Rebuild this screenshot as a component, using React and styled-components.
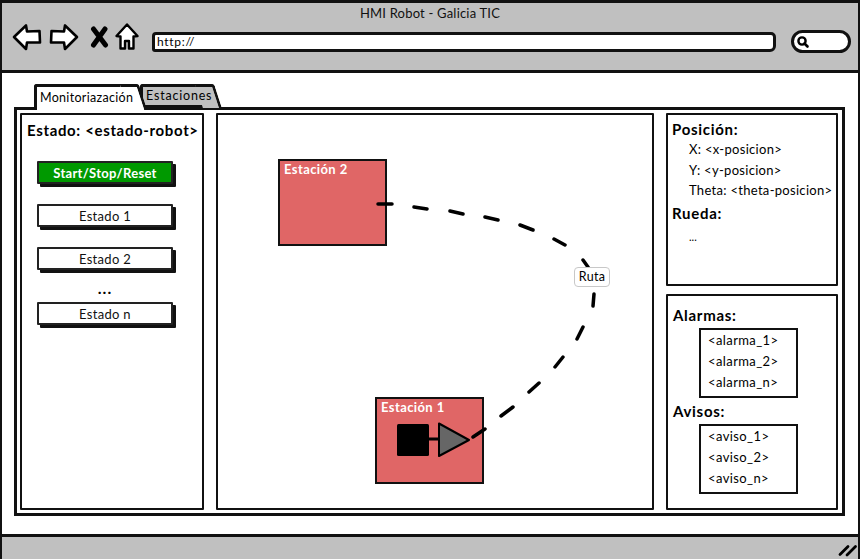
import React from 'react'
import styled, { createGlobalStyle } from 'styled-components'

const GlobalStyle = createGlobalStyle`
  html, body {
    margin: 0;
    padding: 0;
    background: #fff;
    overflow: hidden;
  }
  * {
    box-sizing: border-box;
  }
`

const Dash = 'M378 204L392 204M414 207L427 209M450 211L463 214M485 217L498 220M520 225L533 230M554 239L565 245M583 260L588 267M594 294L593 306M583 327L577 339M563 357L555 367M539 383L529 392M513 407L501 416M485 429L473 437'

const App = () => {
  return (
    <>
      <GlobalStyle />
      <Wrapper>
        <Header>
          <Title>HMI Robot - Galicia TIC</Title>
          <Toolbar>
            <NavIcons>
              <svg width="30" height="28" viewBox="0 0 30 28">
                <path d="M2 14L14 2.500L15 8.500L27.500 8L28 19.500L15 19.500L14 26Z" fill="#fff" stroke="#000" strokeWidth="2.600" strokeLinejoin="round" />
              </svg>
              <svg width="30" height="28" viewBox="0 0 30 28">
                <path d="M28 14L16 2.500L15 8.500L2.500 8L2 19.500L15 19.500L16 26Z" fill="#fff" stroke="#000" strokeWidth="2.600" strokeLinejoin="round" />
              </svg>
              <svg width="19" height="22" viewBox="0 0 19 22">
                <path d="M3.500 3L15.500 19M15 3L3.500 19" fill="none" stroke="#000" strokeWidth="5" strokeLinecap="round" />
              </svg>
              <svg width="24" height="28" viewBox="0 0 24 28">
                <path d="M1.500 13L12 1.500L22.500 13L18.500 13.500L18.500 25.500L14 25.500L14 18L10 18L10 25.500L5.500 25.500L5.500 13.500Z" fill="#fff" stroke="#000" strokeWidth="2.400" strokeLinejoin="round" />
              </svg>
            </NavIcons>
            <AddressBar>http://</AddressBar>
            <SearchBox>
              <svg width="14" height="14" viewBox="0 0 14 14">
                <circle cx="6" cy="6" r="3.600" fill="#fff" stroke="#000" strokeWidth="2.400" />
                <path d="M8.500 8.500L11.500 11.500" stroke="#000" strokeWidth="2.600" strokeLinecap="round" />
              </svg>
            </SearchBox>
          </Toolbar>
        </Header>

        <Main>
          <Tabs>
            <Tab $active>Monitoriazación</Tab>
            <Tab>Estaciones</Tab>
          </Tabs>
          <TabPanel>
            <LeftPanel>
              <PanelTitle>Estado: &lt;estado-robot&gt;</PanelTitle>
              <StateButton $primary>Start/Stop/Reset</StateButton>
              <StateButton>Estado 1</StateButton>
              <StateButton>Estado 2</StateButton>
              <Ellipsis>...</Ellipsis>
              <StateButton>Estado n</StateButton>
            </LeftPanel>

            <Canvas>
              <Station $left={60} $top={44}>Estación 2</Station>
              <Station $left={157} $top={282}>
                Estación 1
                <Robot>
                  <svg width="80" height="40" viewBox="0 0 80 40">
                    <rect x="0" y="3" width="32" height="32" rx="1.500" fill="#000" />
                    <path d="M32 18L42 18" stroke="#000" strokeWidth="3" />
                    <path d="M42 2.500L72 19L42 35Z" fill="#666" stroke="#000" strokeWidth="2" strokeLinejoin="round" />
                  </svg>
                </Robot>
              </Station>
              <RouteLine viewBox="218 115 434 393" width="434" height="393">
                <path d={Dash} fill="none" stroke="#000" strokeWidth="3.500" strokeLinecap="round" />
              </RouteLine>
              <RouteLabel>Ruta</RouteLabel>
            </Canvas>

            <RightColumn>
              <PositionPanel>
                <SectionTitle>Posición:</SectionTitle>
                <InfoList>
                  <InfoRow>X: &lt;x-posicion&gt;</InfoRow>
                  <InfoRow>Y: &lt;y-posicion&gt;</InfoRow>
                  <InfoRow>Theta: &lt;theta-posicion&gt;</InfoRow>
                </InfoList>
                <SectionTitle>Rueda:</SectionTitle>
                <WheelValue>...</WheelValue>
              </PositionPanel>

              <AlertsPanel>
                <SectionTitle>Alarmas:</SectionTitle>
                <MessageBox>
                  <MessageRow>&lt;alarma_1&gt;</MessageRow>
                  <MessageRow>&lt;alarma_2&gt;</MessageRow>
                  <MessageRow>&lt;alarma_n&gt;</MessageRow>
                </MessageBox>
                <SectionTitle>Avisos:</SectionTitle>
                <MessageBox>
                  <MessageRow>&lt;aviso_1&gt;</MessageRow>
                  <MessageRow>&lt;aviso_2&gt;</MessageRow>
                  <MessageRow>&lt;aviso_n&gt;</MessageRow>
                </MessageBox>
              </AlertsPanel>
            </RightColumn>
          </TabPanel>
        </Main>

        <Footer>
          <svg width="20" height="14" viewBox="0 0 20 14">
            <path d="M2 11.500L10 3.500M9 12L17.500 3.500" fill="none" stroke="#000" strokeWidth="2.800" strokeLinecap="round" />
          </svg>
        </Footer>
      </Wrapper>
    </>
  )
}

export default App

const Wrapper = styled.div`
  width: 860px;
  height: 559px;
  display: flex;
  flex-direction: column;
  border-top: 3px solid #111;
  border-left: 2px solid #111;
  border-right: 2px solid #111;
  font-family: 'Lato', 'Noto Sans', sans-serif;
  color: #000;
  overflow: hidden;
`

const Header = styled.div`
  height: 70px;
  flex: none;
  background: #c0c0c0;
  border-bottom: 3px solid #111;
  padding-top: 3px;
`

const Title = styled.div`
  text-align: center;
  font-size: 13px;
  line-height: 15px;
  letter-spacing: 0.2px;
  color: #111;
`

const Toolbar = styled.div`
  display: flex;
  align-items: center;
  margin-top: 2px;
  padding-left: 10px;
`

const NavIcons = styled.div`
  display: flex;
  align-items: center;
  width: 140px;
  height: 34px;

  svg {
    margin-bottom: 6px;
  }

  svg:nth-child(2) {
    margin-left: 7px;
  }

  svg:nth-child(3) {
    margin-left: 11px;
  }

  svg:nth-child(4) {
    margin-left: 6px;
  }
`

const AddressBar = styled.div`
  width: 624px;
  height: 20px;
  margin-top: 3px;
  background: #fff;
  border: 3px solid #111;
  border-radius: 4px 5px 6px 3px;
  font-size: 12px;
  line-height: 14px;
  letter-spacing: 0.7px;
  padding-left: 2px;
`

const SearchBox = styled.div`
  width: 60px;
  height: 23px;
  margin-left: 15px;
  margin-top: 2px;
  background: #fff;
  border: 3px solid #111;
  border-radius: 12px;
  padding: 2px 0 0 2px;
  display: flex;
  align-items: flex-start;
`

const Main = styled.div`
  flex: 1;
  background: #fff;
  padding: 11px 11px 0 12px;
`

const Tabs = styled.div`
  display: flex;
  padding-left: 20px;
  position: relative;
  z-index: 1;
  margin-bottom: -3px;
`

const Tab = styled.div`
  position: relative;
  height: ${(p) => (p.$active ? '26px' : '24px')};
  width: ${(p) => (p.$active ? '100px' : '69px')};
  margin-right: ${(p) => (p.$active ? '6px' : '0')};
  padding: ${(p) => (p.$active ? '3px 0 0 3px' : '1px 0 0 3px')};
  background: ${(p) => (p.$active ? '#fff' : '#c0c0c0')};
  border-top: 3px solid #111;
  border-left: 3px solid #111;
  border-bottom: ${(p) => (p.$active ? 'none' : '3px solid #111')};
  border-radius: 3px 0 0 0;
  font-size: 12.500px;
  line-height: 15px;
  letter-spacing: ${(p) => (p.$active ? '0.3px' : '0.8px')};
  white-space: nowrap;
  z-index: ${(p) => (p.$active ? 2 : 1)};

  &::after {
    content: '';
    position: absolute;
    top: -3px;
    bottom: ${(p) => (p.$active ? '0' : '-3px')};
    right: -9px;
    width: 16px;
    background: inherit;
    border-top: 3px solid #111;
    border-right: 3px solid #111;
    border-radius: 0 3px 0 0;
    transform: skewX(18deg);
    z-index: -1;
  }
`

const TabPanel = styled.div`
  width: 831px;
  height: 409px;
  border: 3px solid #111;
  padding: 3px 4px 3px 3px;
  display: grid;
  grid-template-columns: 184px 438px 172px;
  column-gap: 12px;
`

const Panel = styled.div`
  border: 2px solid #111;
  border-radius: 1px;
  background: #fff;
`

const LeftPanel = styled(Panel)`
  padding: 6px 0 0 5px;
  display: flex;
  flex-direction: column;
  align-items: flex-start;
`

const PanelTitle = styled.div`
  font-size: 15px;
  line-height: 18px;
  font-weight: 700;
  letter-spacing: 0.65px;
  white-space: nowrap;
  margin-bottom: 22px;
`

const StateButton = styled.div`
  width: 136px;
  height: 23px;
  margin-left: 10px;
  margin-bottom: 20px;
  background: ${(p) => (p.$primary ? '#009900' : '#fff')};
  color: ${(p) => (p.$primary ? '#fff' : '#111')};
  font-weight: ${(p) => (p.$primary ? 700 : 400)};
  border: 2px solid #222;
  box-shadow: 3px 3px 0 #111;
  border-radius: 1px;
  text-align: center;
  font-size: 13px;
  line-height: 20px;
  letter-spacing: 0.3px;
`

const Ellipsis = styled.div`
  width: 136px;
  margin: -17px 0 0 10px;
  height: 29px;
  text-align: center;
  font-size: 16px;
  font-weight: 700;
  line-height: 29px;
  letter-spacing: 1px;
`

const Canvas = styled(Panel)`
  position: relative;
`

const Station = styled.div`
  position: absolute;
  left: ${(p) => p.$left}px;
  top: ${(p) => p.$top}px;
  width: 109px;
  height: 87px;
  background: #e06666;
  border: 2px solid #111;
  color: #fff;
  font-size: 13px;
  font-weight: 700;
  line-height: 15px;
  letter-spacing: 0.4px;
  padding: 1px 0 0 4px;
`

const Robot = styled.div`
  position: absolute;
  left: 20px;
  top: 22px;
  line-height: 0;
`

const RouteLine = styled.svg`
  position: absolute;
  left: 0;
  top: 0;
`

const RouteLabel = styled.div`
  position: absolute;
  left: 356px;
  top: 152px;
  width: 36px;
  height: 20px;
  background: #fff;
  border: 1px solid #c8c8c8;
  border-radius: 4px;
  font-size: 12.500px;
  line-height: 18px;
  text-align: center;
  letter-spacing: 0.3px;
`

const RightColumn = styled.div`
  display: grid;
  grid-template-rows: 173px 216px;
  row-gap: 8px;
`

const PositionPanel = styled(Panel)`
  padding: 5px 0 0 4px;
`

const AlertsPanel = styled(Panel)`
  padding: 10px 0 0 5px;
`

const SectionTitle = styled.div`
  font-size: 15px;
  line-height: 18px;
  font-weight: 700;
  letter-spacing: 0.7px;
`

const InfoList = styled.div`
  padding: 1px 0 3px 17px;
`

const InfoRow = styled.div`
  font-size: 13px;
  line-height: 20.500px;
  letter-spacing: 0.3px;
  white-space: nowrap;
`

const WheelValue = styled.div`
  padding: 8px 0 0 17px;
  font-size: 11px;
  line-height: 14px;
`

const MessageBox = styled.div`
  width: 99px;
  height: 70px;
  margin: 4px 0 4px 26px;
  border: 2px solid #111;
  padding: 0 0 0 7px;
`

const MessageRow = styled.div`
  font-size: 13px;
  line-height: 21px;
  letter-spacing: 0.4px;
  white-space: nowrap;
`

const Footer = styled.div`
  height: 25px;
  flex: none;
  background: #c0c0c0;
  border-top: 3px solid #111;
  display: flex;
  justify-content: flex-end;
  align-items: center;
  padding: 3px 0 0 0;
`
